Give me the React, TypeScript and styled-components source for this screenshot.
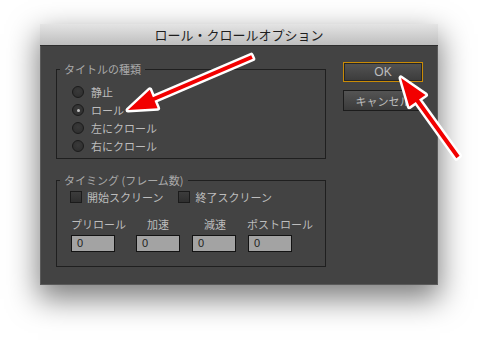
import styled, { createGlobalStyle } from "styled-components";

const GlobalStyle = createGlobalStyle`
    html, body {
      margin: 0;
      padding: 0;
      background: #ffffff;
    }
    body {
      width: 478px;
      height: 340px;
      overflow: hidden;
      position: relative;
      font-family: "Noto Sans CJK JP", "Noto Sans", sans-serif;
    }
`;

const Page = styled.div`
    padding: 24px 0 0 40px;
`;

const Window = styled.div`
    width: 398px;
    height: 261px;
    display: flex;
    flex-direction: column;
    background: #434343;
    border: 1px solid #5a5a5a;
    border-top: none;
    box-sizing: border-box;
    box-shadow: 0 12px 28px 2px rgba(0, 0, 0, 0.5);
`;

const TitleBar = styled.div`
    height: 22px;
    flex: none;
    display: flex;
    align-items: center;
    justify-content: center;
    background: linear-gradient(#e4e4e4, #bebebe);
    border-bottom: 1px solid #2e2e2e;
    color: #1e1e1e;
    font-size: 13px;
    box-sizing: border-box;
    margin: 0 -1px;
`;

const Body = styled.div`
    flex: 1;
    display: flex;
    padding: 16px 14px 0 15px;
    gap: 17px;
`;

const LeftColumn = styled.div`
    width: 270px;
    display: flex;
    flex-direction: column;
    gap: 14px;
`;

const Group = styled.fieldset<{ $padTop: number; $padBottom: number }>`
    margin: 0;
    padding: ${({ $padTop }) => $padTop}px 0 ${({ $padBottom }) => $padBottom}px;
    border: 1px solid #1f1f1f;
    min-width: 0;
    box-sizing: border-box;
`;

const Legend = styled.legend`
    margin-left: 3px;
    padding: 0 4px;
    font-size: 11px;
    line-height: 14px;
    color: #a9a9a9;
`;

const RadioRow = styled.div`
    height: 18px;
    display: flex;
    align-items: center;
    padding-left: 15px;
    gap: 7px;
    font-size: 11px;
    color: #bdbdbd;
`;

const Radio = styled.span<{ $checked?: boolean }>`
    width: 12px;
    height: 12px;
    box-sizing: border-box;
    border-radius: 50%;
    border: 1px solid #1b1b1b;
    background: radial-gradient(circle at 50% 40%, #3a3a3a, #2c2c2c);
    display: flex;
    align-items: center;
    justify-content: center;
    &::after {
      content: "";
      width: 3px;
      height: 3px;
      border-radius: 50%;
      background: ${({ $checked }) => ($checked ? "#c4c4c4" : "transparent")};
    }
`;

const CheckRow = styled.div`
    height: 16px;
    display: flex;
    align-items: center;
    padding-left: 13px;
    font-size: 11px;
    color: #bdbdbd;
`;

const CheckItem = styled.label`
    display: flex;
    align-items: center;
    gap: 5px;
    margin-right: 15px;
`;

const CheckBox = styled.span`
    width: 12px;
    height: 12px;
    box-sizing: border-box;
    border: 1px solid #1b1b1b;
    background: linear-gradient(#3c3c3c, #2f2f2f);
`;

const FieldGrid = styled.div`
    display: grid;
    grid-template-columns: 65px 56px 56px auto;
    margin: 12px 0 0 14px;
`;

const Field = styled.div<{ $shift: number }>`
    display: flex;
    flex-direction: column;
    gap: 4px;

    span {
      margin-left: ${({ $shift }) => $shift}px;
      font-size: 11px;
      line-height: 14px;
      color: #bdbdbd;
      white-space: nowrap;
    }
`;

const NumberBox = styled.div`
    width: 44px;
    height: 17px;
    box-sizing: border-box;
    border: 1px solid #131313;
    background: #a3a3a3;
    color: #1e1e1e;
    font-family: "Liberation Sans", sans-serif;
    font-size: 11px;
    line-height: 15px;
    padding-left: 5px;
`;

const ButtonColumn = styled.div`
    width: 80px;
    display: flex;
    flex-direction: column;
    gap: 8px;
`;

const Button = styled.div<{ $primary?: boolean }>`
    height: ${({ $primary }) => ($primary ? 20 : 21)}px;
    box-sizing: border-box;
    border: 1px solid ${({ $primary }) => ($primary ? "#c98b06" : "#1c1c1c")};
    background: linear-gradient(#545454, #3b3b3b);
    box-shadow: inset 0 0 0 1px ${({ $primary }) => ($primary ? "#262626" : "transparent")};
    display: flex;
    align-items: center;
    justify-content: center;
    font-size: ${({ $primary }) => ($primary ? 12 : 11)}px;
    color: #bdbdbd;
    font-family: ${({ $primary }) => ($primary ? '"Liberation Sans", sans-serif' : 'inherit')};
`;

const Overlay = styled.svg`
    position: absolute;
    left: 0;
    top: 0;
    pointer-events: none;
`;

const arrows: string[] = [
    "252.8,58.8 154.5,100.8 157.6,108.2 128,110 149.8,89.8 152.9,97.2 251.2,55.2",
    "459.6,155.8 419,99.5 425.5,94.9 401,78 409.3,106.6 415.8,101.9 456.4,158.2",
];

const fields: { label: string; shift: number }[] = [
    { label: "プリロール", shift: 0 },
    { label: "加速", shift: 11 },
    { label: "減速", shift: 12 },
    { label: "ポストロール", shift: -1 },
];

const titleTypes: string[] = ["静止", "ロール", "左にクロール", "右にクロール"];

const App = () => {
    return (
        <>
            <GlobalStyle />
            <Page>
                <Window>
                    <TitleBar>ロール・クロールオプション</TitleBar>
                    <Body>
                        <LeftColumn>
                            <Group $padTop={7} $padBottom={3}>
                                <Legend>タイトルの種類</Legend>
                                {titleTypes.map((t, idx) => (
                                    <RadioRow key={idx}>
                                        <Radio $checked={idx === 1} />
                                        {t}
                                    </RadioRow>
                                ))}
                            </Group>
                            <Group $padTop={2} $padBottom={14}>
                                <Legend>タイミング (フレーム数)</Legend>
                                <CheckRow>
                                    <CheckItem><CheckBox />開始スクリーン</CheckItem>
                                    <CheckItem><CheckBox />終了スクリーン</CheckItem>
                                </CheckRow>
                                <FieldGrid>
                                    {fields.map((f, idx) => (
                                        <Field key={idx} $shift={f.shift}>
                                            <span>{f.label}</span>
                                            <NumberBox>0</NumberBox>
                                        </Field>
                                    ))}
                                </FieldGrid>
                            </Group>
                        </LeftColumn>
                        <ButtonColumn>
                            <Button $primary>OK</Button>
                            <Button>キャンセル</Button>
                        </ButtonColumn>
                    </Body>
                </Window>
            </Page>
            <Overlay width={478} height={340} viewBox="0 0 478 340">
                {arrows.map((pts, idx) => (
                    <polygon
                        key={idx}
                        points={pts}
                        fill="#f20000"
                        stroke="#ffffff"
                        strokeWidth={5}
                        strokeLinejoin="round"
                        paintOrder="stroke"
                    />
                ))}
            </Overlay>
        </>
    );
};

export default App;
